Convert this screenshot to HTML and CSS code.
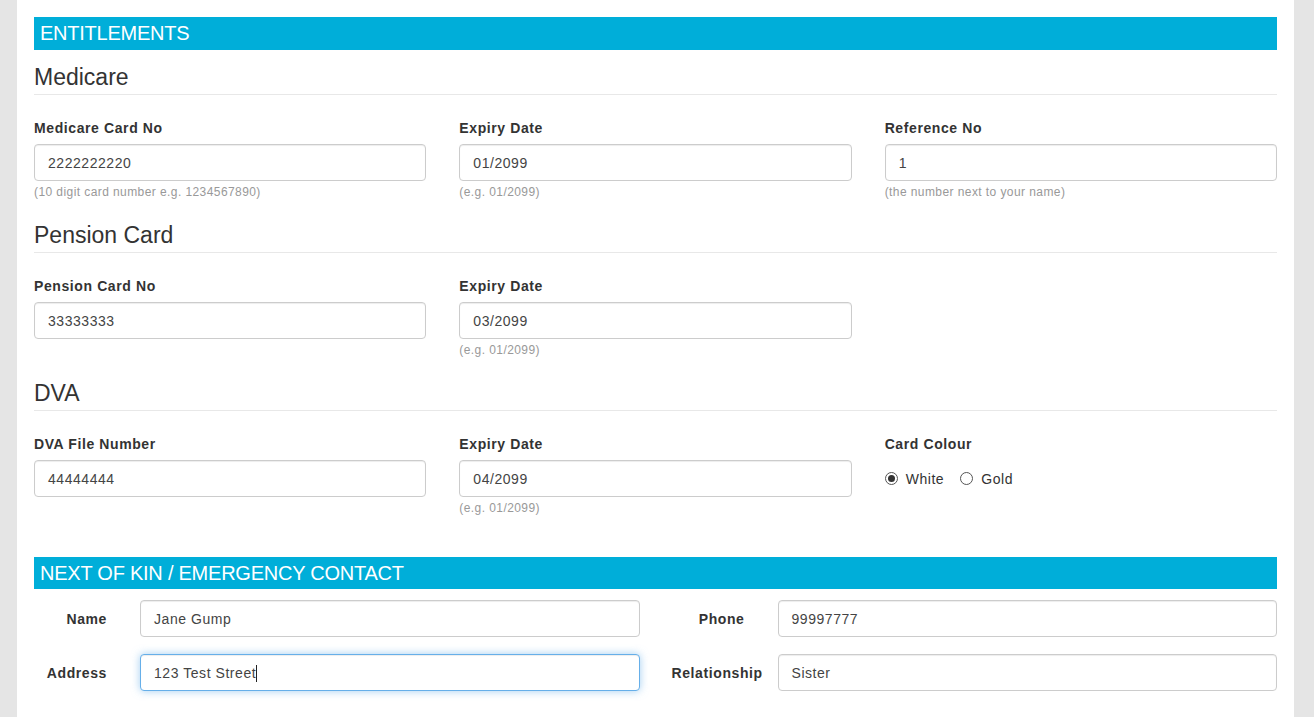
FILE: index.html
```html
<!DOCTYPE html>
<html lang="en">
<head>
<meta charset="utf-8">
<title>Entitlements</title>
<link rel="stylesheet" href="styles.css">
</head>
<body>
<div class="page">
  <div class="bar">ENTITLEMENTS</div>

  <h3 class="sub sub-first">Medicare</h3>
  <div class="grid3">
    <div class="group">
      <div class="lbl">Medicare Card No</div>
      <div class="field">2222222220</div>
      <div class="help">(10 digit card number e.g. 1234567890)</div>
    </div>
    <div class="group">
      <div class="lbl">Expiry Date</div>
      <div class="field">01/2099</div>
      <div class="help">(e.g. 01/2099)</div>
    </div>
    <div class="group">
      <div class="lbl">Reference No</div>
      <div class="field">1</div>
      <div class="help">(the number next to your name)</div>
    </div>
  </div>

  <h3 class="sub">Pension Card</h3>
  <div class="grid3">
    <div class="group">
      <div class="lbl">Pension Card No</div>
      <div class="field">33333333</div>
    </div>
    <div class="group">
      <div class="lbl">Expiry Date</div>
      <div class="field">03/2099</div>
      <div class="help">(e.g. 01/2099)</div>
    </div>
  </div>

  <h3 class="sub">DVA</h3>
  <div class="grid3">
    <div class="group">
      <div class="lbl">DVA File Number</div>
      <div class="field">44444444</div>
    </div>
    <div class="group">
      <div class="lbl">Expiry Date</div>
      <div class="field">04/2099</div>
      <div class="help">(e.g. 01/2099)</div>
    </div>
    <div class="group">
      <div class="lbl">Card Colour</div>
      <div class="radios">
        <span class="radio"><span class="dot checked"></span>White</span>
        <span class="radio"><span class="dot"></span>Gold</span>
      </div>
    </div>
  </div>

  <div class="bar bar-kin">NEXT OF KIN / EMERGENCY CONTACT</div>
  <div class="kin">
    <div class="kin-half">
      <div class="klbl">Name</div>
      <div class="field">Jane Gump</div>
    </div>
    <div class="kin-half">
      <div class="klbl">Phone</div>
      <div class="field">99997777</div>
    </div>
    <div class="kin-half">
      <div class="klbl">Address</div>
      <div class="field focus">123 Test Street<span class="caret"></span></div>
    </div>
    <div class="kin-half">
      <div class="klbl">Relationship</div>
      <div class="field">Sister</div>
    </div>
  </div>
</div>
</body>
</html>
```

FILE: styles.css
```css
html, body {
  margin: 0;
  padding: 0;
  background: #e5e5e5;
  font-family: "Liberation Sans", Arial, sans-serif;
  color: #333;
}

.page {
  margin-left: 17px;
  width: 1243px;
  min-height: 717px;
  padding: 17px 17px 0 17px;
  background: #fff;
  box-sizing: content-box;
}

.bar {
  height: 33px;
  line-height: 33px;
  background: #00aed9;
  color: #fff;
  font-size: 20px;
  letter-spacing: -0.24px;
  padding-left: 6px;
}

.bar-kin {
  margin-top: 40px;
  height: 32px;
  line-height: 32px;
}

.sub {
  margin: 21px 0 0 0;
  font-size: 23px;
  font-weight: normal;
  line-height: 26px;
  padding-bottom: 4px;
  border-bottom: 1px solid #e8e8e8;
  color: #333;
}

.sub-first {
  margin-top: 14px;
}

.grid3 {
  display: grid;
  grid-template-columns: 1fr 1fr 1fr;
  column-gap: 33px;
  margin-top: 23px;
}

.lbl {
  font-size: 14px;
  font-weight: bold;
  line-height: 20px;
  letter-spacing: 0.6px;
  margin-bottom: 6px;
}

.field {
  box-sizing: border-box;
  height: 37px;
  border: 1px solid #ccc;
  border-radius: 4px;
  padding: 0 13px;
  font-size: 14px;
  letter-spacing: 0.55px;
  line-height: 37px;
  color: #444;
  background: #fff;
  box-shadow: inset 0 1px 1px rgba(0, 0, 0, 0.075);
  white-space: nowrap;
}

.field.focus {
  border-color: #66afe9;
  box-shadow: inset 0 1px 1px rgba(0, 0, 0, 0.075), 0 0 8px rgba(102, 175, 233, 0.6);
}

.caret {
  display: inline-block;
  width: 1px;
  height: 17px;
  background: #222;
  vertical-align: -4px;
  margin-left: -0.5px;
}

.help {
  font-size: 12px;
  line-height: 17px;
  letter-spacing: 0.42px;
  color: #999;
  margin-top: 3px;
}

.radios {
  height: 37px;
  display: flex;
  align-items: center;
  gap: 16px;
  font-size: 14px;
  letter-spacing: 0.55px;
  color: #333;
}

.radio {
  display: inline-flex;
  align-items: center;
  gap: 8px;
}

.dot {
  box-sizing: border-box;
  width: 13px;
  height: 13px;
  border: 1px solid #555;
  border-radius: 50%;
  background: #fff;
  position: relative;
  display: inline-block;
}

.dot.checked::after {
  content: "";
  position: absolute;
  left: 2px;
  top: 2px;
  width: 7px;
  height: 7px;
  border-radius: 50%;
  background: #333;
}

.kin {
  display: grid;
  grid-template-columns: 1fr 1fr;
  column-gap: 32px;
  row-gap: 17px;
  margin-top: 11px;
}

.kin-half {
  display: grid;
  grid-template-columns: 91px 1fr;
  column-gap: 15px;
  align-items: center;
}

.klbl {
  font-size: 14px;
  font-weight: bold;
  letter-spacing: 0.6px;
  text-align: right;
  padding-right: 18px;
  white-space: nowrap;
  overflow: visible;
}
```
